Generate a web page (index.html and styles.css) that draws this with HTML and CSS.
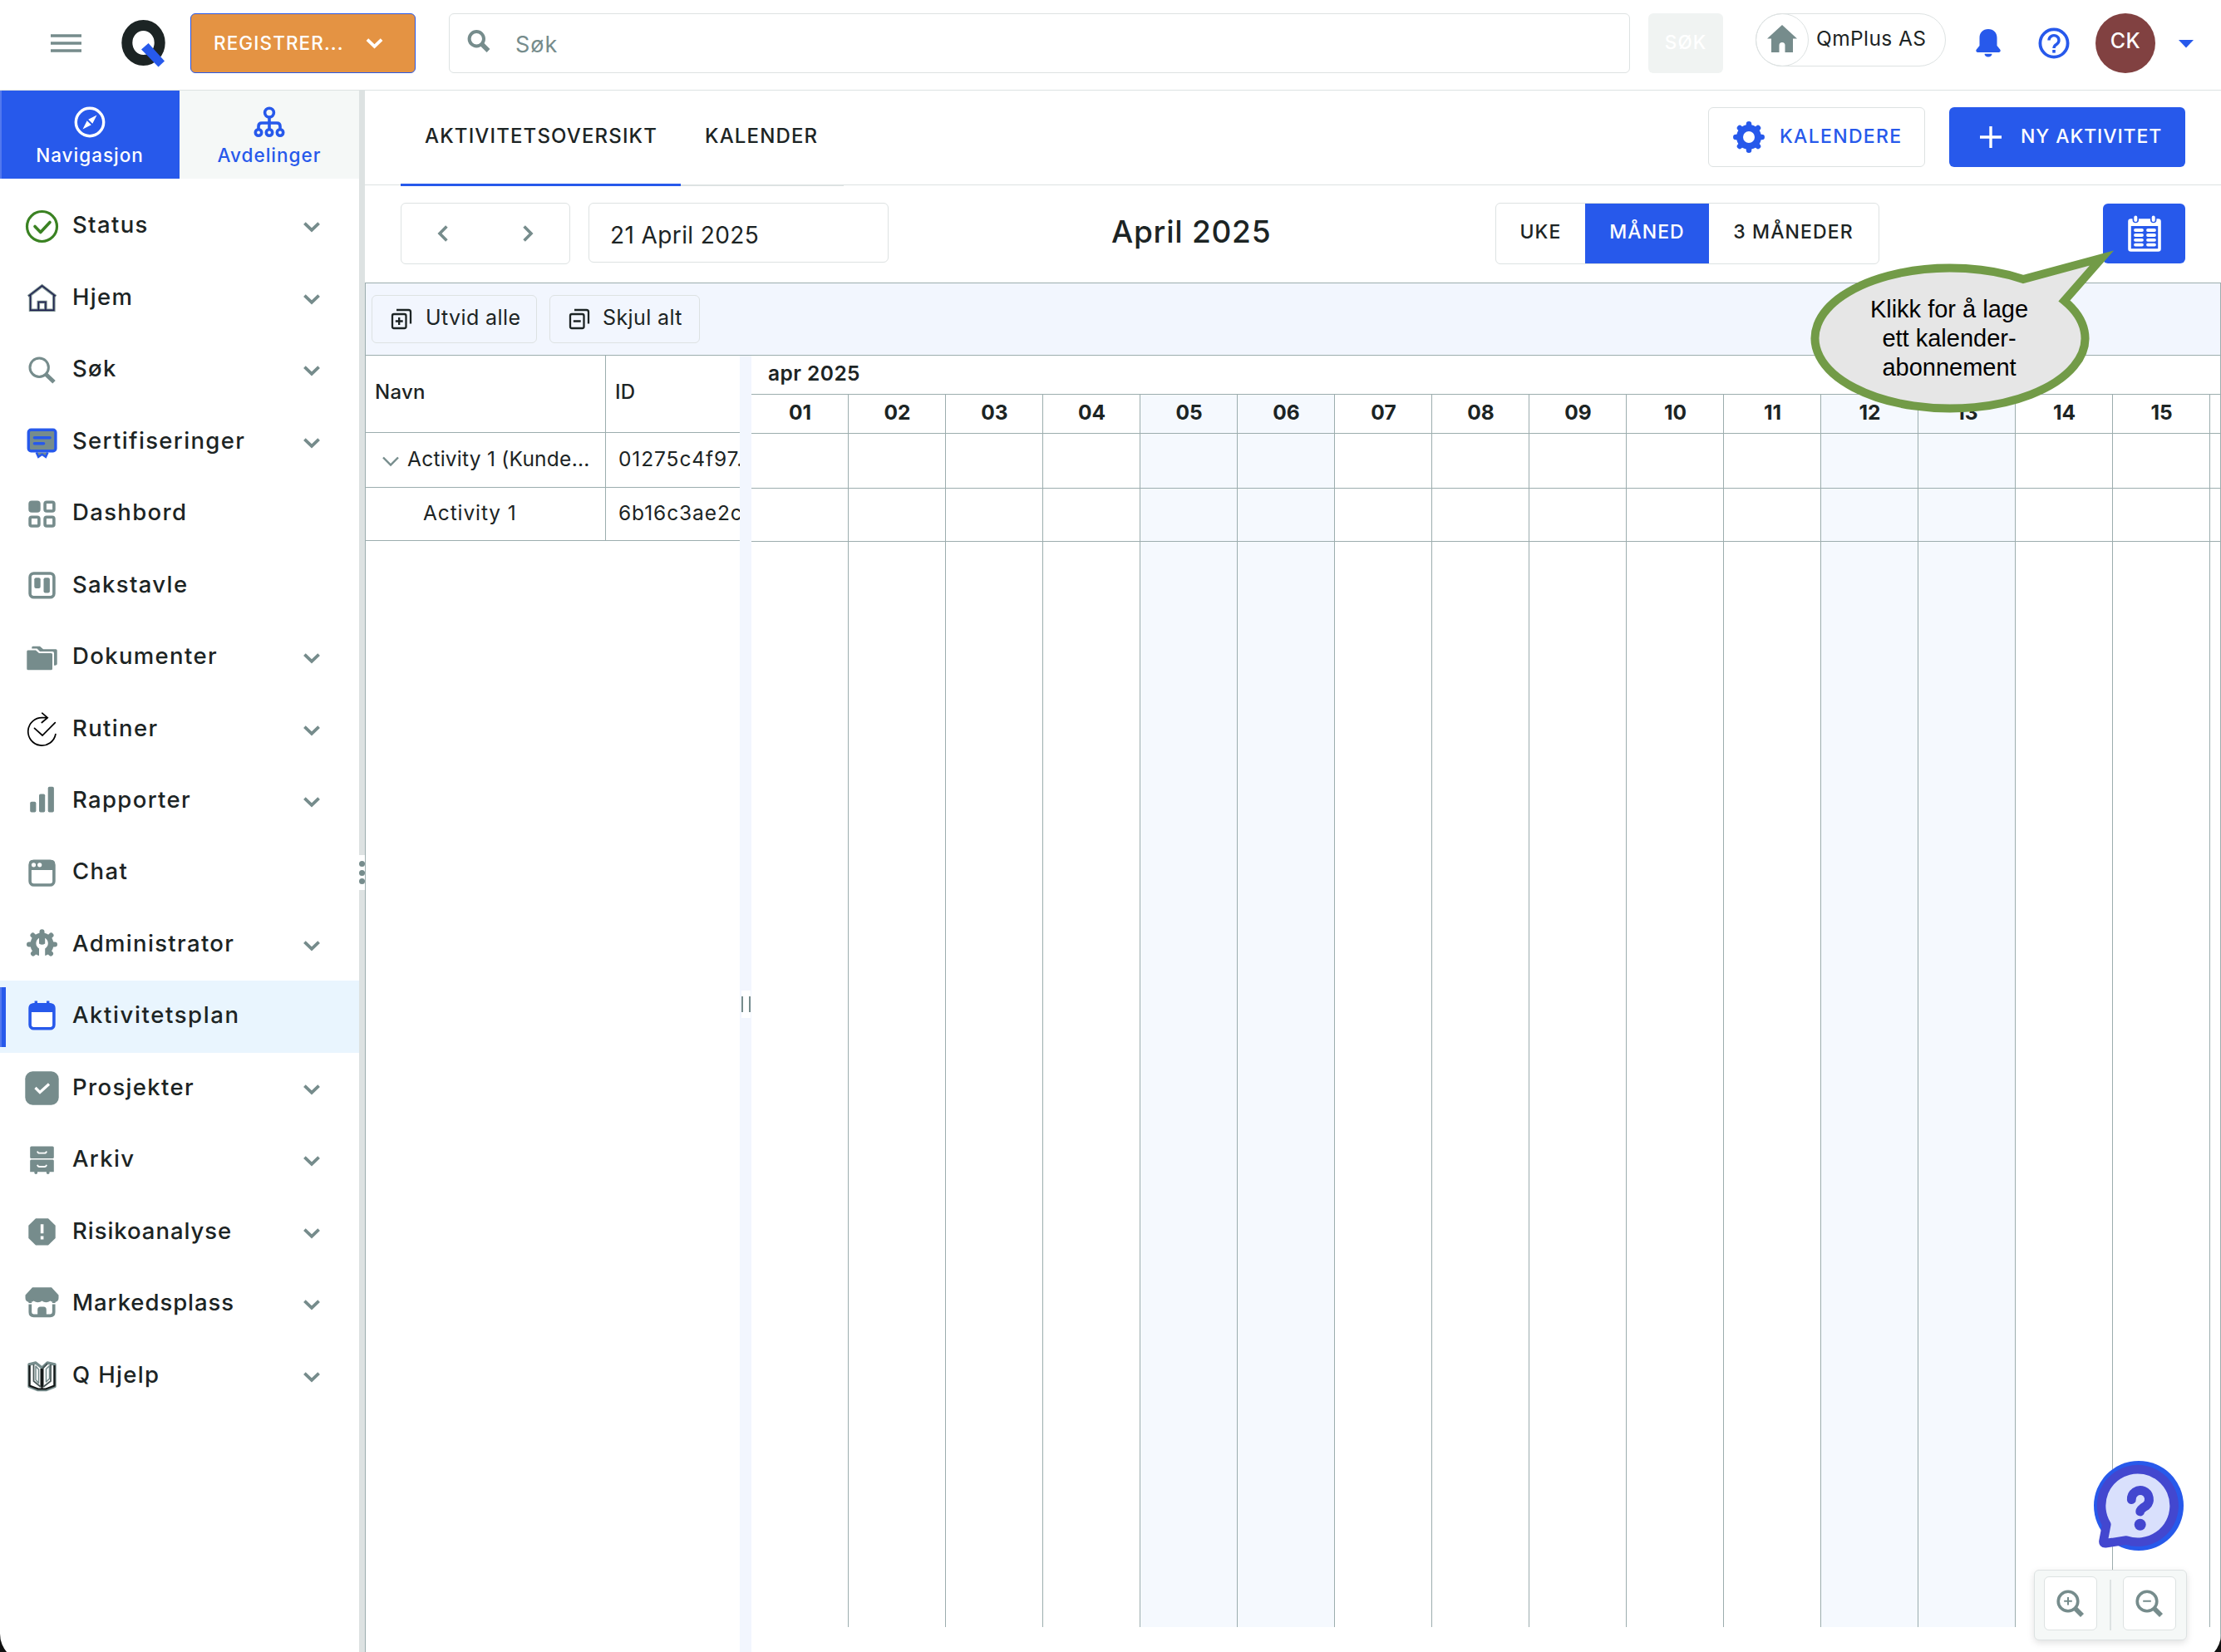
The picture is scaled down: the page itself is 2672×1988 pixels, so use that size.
FILE: index.html
```html
<!DOCTYPE html>
<html lang="no">
<head>
<meta charset="utf-8">
<title>Aktivitetsplan</title>
<link rel="stylesheet" href="styles.css">
</head>
<body>
<svg class="defs" width="0" height="0">
  <symbol id="chev" viewBox="0 0 20 13"><path d="M1.4 1.6 10 9.8 18.6 1.6" fill="none" stroke="currentColor" stroke-width="3.8"/></symbol>
</svg>
<div class="app">
  <header class="topbar">
    <svg class="burger" width="37" height="22" viewBox="0 0 37 22"><path d="M0 2h37M0 11h37M0 20h37" stroke="#768c8c" stroke-width="3.6"/></svg>
    <svg class="logo" width="56" height="58" viewBox="0 0 56 58"><ellipse cx="26.5" cy="27.5" rx="19.7" ry="21" fill="none" stroke="#1c2424" stroke-width="13"/><path d="M32.6 28 52 49.5 44.5 56.5 24 35.5Z" fill="#2759eb"/></svg>
    <button class="register"><span>REGISTRER...</span><svg width="21" height="13"><use href="#chev"/></svg></button>
    <div class="search">
      <svg width="29" height="28" viewBox="0 0 29 28"><circle cx="11.3" cy="10.7" r="8.7" fill="none" stroke="#768c8c" stroke-width="4"/><path d="m17.5 17 8 8" stroke="#768c8c" stroke-width="5.4"/></svg>
      <span>Søk</span>
    </div>
    <button class="search-btn">SØK</button>
    <div class="org">
      <span class="org-icon"><svg width="36" height="34" viewBox="0 0 36 34"><path d="M18 0 36 16.5H31V33H21.500V24.500a3.500 3.500 0 0 0-7 0V33H5V16.500H0Z" fill="#768c8c"/></svg></span>
      <span class="org-name">QmPlus AS</span>
    </div>
    <svg class="bell" width="30" height="34" viewBox="0 0 30 34"><path d="M15 0C8.500 0 4.500 4.500 4.500 10.500V20L.8 24.500C-.2 26 .3 28 2.300 28H27.700C29.700 28 30.200 26 29.200 24.500L25.500 20V10.500C25.500 4.500 21.500 0 15 0ZM10.500 29.800h9a4.500 3.800 0 0 1-9 0Z" fill="#2759eb"/></svg>
    <svg class="help" width="38" height="38" viewBox="0 0 38 38"><circle cx="19" cy="19" r="16.600" fill="none" stroke="#2759eb" stroke-width="3.800"/><path d="M13 15.500a6 5.800 0 1 1 9.300 4.800C20 21.700 19 22.600 19 25" fill="none" stroke="#2759eb" stroke-width="3.400"/><rect x="17.200" y="27" width="3.600" height="3.600" fill="#2759eb"/></svg>
    <div class="avatar">CK</div>
    <svg class="caret" width="18" height="10" viewBox="0 0 18 10"><path d="M0 0h18L9 9.500Z" fill="#2759eb"/></svg>
  </header>

  <div class="shell">
    <aside class="sidebar">
      <div class="side-tabs">
        <div class="side-tab active">
          <svg width="38" height="38" viewBox="0 0 38 38"><circle cx="19" cy="19" r="16.700" fill="none" stroke="#fff" stroke-width="3.400"/><path d="M27.500 10.500 22.300 20.800 17.200 15.800ZM10.500 27.500 15.700 17.200 20.800 22.200Z" fill="#fff"/></svg>
          <span>Navigasjon</span>
        </div>
        <div class="side-tab">
          <svg width="38" height="38" viewBox="0 0 38 38" fill="none" stroke="#2759eb" stroke-width="3.600"><circle cx="19" cy="7.600" r="5.400"/><path d="M19 13V28M6 28V24q0-4 4-4H28q4 0 4 4V28"/><circle cx="6" cy="31.500" r="3.700"/><circle cx="19" cy="31.500" r="3.700"/><circle cx="32" cy="31.500" r="3.700"/></svg>
          <span>Avdelinger</span>
        </div>
      </div>
      <nav class="menu">
        <div class="item"><svg class="ic" viewBox="0 0 41 41" fill="none" stroke="#3a8222" stroke-width="3.200"><circle cx="20.500" cy="20.500" r="18"/><path d="M12 20.500 18.800 27.500 30 15.500" stroke-width="3.600" stroke-linecap="round" stroke-linejoin="round"/></svg><span>Status</span><svg class="chev"><use href="#chev"/></svg></div>
        <div class="item"><svg class="ic" viewBox="0 0 41 41" fill="none"><path d="M4 18.700 20.600 6 37.200 18.700M6.600 17V35.200H34.800V17M16.300 35V25.500H24.900V35" stroke="#768c8c" stroke-width="3.600"/><path d="M4.500 18.300 20.600 6 36.700 18.300M6.600 17V35.200H34.800V17M16.300 35V25.500H24.900V35" stroke="#1f1f50" stroke-width="1.400"/></svg><span>Hjem</span><svg class="chev"><use href="#chev"/></svg></div>
        <div class="item"><svg class="ic" viewBox="0 0 41 41" fill="none" stroke="#768c8c"><circle cx="17.200" cy="17.200" r="11.200" stroke-width="3"/><path d="m25 25.300 10 9.500" stroke-width="5"/></svg><span>Søk</span><svg class="chev"><use href="#chev"/></svg></div>
        <div class="item"><svg class="ic" viewBox="0 0 41 41" fill="#768c8c" stroke="#2759eb"><path d="M13.800 33.500 16.200 38.800 20.600 35.800 25 38.800 27.400 33.500" stroke-width="2.600"/><rect x="4.300" y="6.200" width="32.600" height="25.600" rx="3" stroke-width="3.400"/><path d="M11.500 15.700H30M11.500 22.800H22.500" stroke-width="3.600" stroke-linecap="round"/></svg><span>Sertifiseringer</span><svg class="chev"><use href="#chev"/></svg></div>
        <div class="item"><svg class="ic" viewBox="0 0 41 41" fill="none" stroke="#768c8c" stroke-width="3.600"><rect x="6.100" y="6.200" width="10.800" height="10.800" rx="2" fill="#768c8c"/><rect x="24.100" y="6.200" width="10.800" height="10.800" rx="2"/><rect x="6.100" y="24.200" width="10.800" height="10.800" rx="2"/><rect x="24.100" y="24.200" width="10.800" height="10.800" rx="2"/></svg><span>Dashbord</span></div>
        <div class="item"><svg class="ic" viewBox="0 0 41 41" fill="#768c8c"><rect x="6.100" y="6" width="28.800" height="28.800" rx="4.500" fill="none" stroke="#768c8c" stroke-width="3.600"/><rect x="11.300" y="11.200" width="7.400" height="12.800" rx="2"/><rect x="22.500" y="11.200" width="7.400" height="18.200" rx="2"/></svg><span>Sakstavle</span></div>
        <div class="item"><svg class="ic" viewBox="0 0 41 41" fill="#768c8c"><path d="M3.500 11.500H13L17 15H31.500Q33 15 33 16.500V33.700Q33 35.200 31.500 35.200H3.800Q2.300 35.200 2.300 33.700V13Q2.300 11.500 3.500 11.500Z"/><path d="M8.300 8Q8.300 6.800 9.800 6.800H18L22 10.200H37.200Q38.700 10.200 38.700 11.700V28Q38.700 29.800 35 29.800V15Q35 13 33 13H18L14.500 9.500H8.300Z"/></svg><span>Dokumenter</span><svg class="chev"><use href="#chev"/></svg></div>
        <div class="item"><svg class="ic" viewBox="0 0 41 41" fill="none" stroke="#000" stroke-width="1.700" stroke-linecap="round"><path d="M27 6.700H21A16.700 16.700 0 1 0 36.900 26.500M20.700 1.200 27.200 6.700 20.300 12.500M11.500 19.300 21 28 36.300 12.700"/></svg><span>Rutiner</span><svg class="chev"><use href="#chev"/></svg></div>
        <div class="item"><svg class="ic" viewBox="0 0 41 41" fill="#768c8c"><rect x="6.200" y="21.800" width="7.200" height="12.700" rx="1.800"/><rect x="17" y="12.500" width="7.200" height="22" rx="1.800"/><rect x="27.700" y="3.700" width="7.200" height="30.800" rx="1.800"/></svg><span>Rapporter</span><svg class="chev"><use href="#chev"/></svg></div>
        <div class="item"><svg class="ic" viewBox="0 0 41 41"><rect x="6.100" y="6.200" width="28.800" height="28.800" rx="4.500" fill="none" stroke="#768c8c" stroke-width="3.600"/><path d="M5 17V9Q5 5 9 5H32Q36 5 36 9V17Z" fill="#768c8c"/><circle cx="10.500" cy="10.800" r="2.600" fill="#fff"/><circle cx="17.700" cy="10.800" r="2.600" fill="#fff"/></svg><span>Chat</span></div>
        <div class="item"><svg class="ic" viewBox="0 0 41 41"><circle cx="20.500" cy="20.500" r="14" fill="#768c8c"/><path d="M20.500 20.500V5.300M20.500 20.500 31.500 9.500M20.500 20.500H36M20.500 20.500 31 31.500M20.500 20.500 10 31.500M20.500 20.500H5M20.500 20.500 9.500 9.500" stroke="#768c8c" stroke-width="6" stroke-linecap="round"/><path d="M17 12.800A7.400 7.400 0 0 0 17 25.500V37H24.200V25.500A7.400 7.400 0 0 0 24.200 12.800V19.500Q20.600 22 17 19.500Z" fill="#fff"/></svg><span>Administrator</span><svg class="chev"><use href="#chev"/></svg></div>
        <div class="item current"><svg class="ic" viewBox="0 0 41 41"><rect x="6.100" y="5.800" width="28.800" height="29" rx="4.500" fill="#fff" stroke="#2759eb" stroke-width="3.600"/><path d="M5 15V9Q5 5 9 5H32Q36 5 36 9V15ZM11.600 1.500h3.400v5h-3.400ZM26 1.500h3.400v5H26Z" fill="#2759eb"/></svg><span>Aktivitetsplan</span></div>
        <div class="item"><svg class="ic" viewBox="0 0 41 41"><rect x=".3" y=".3" width="40.400" height="40.400" rx="9" fill="#768c8c"/><path d="M12.500 20 18 25.500 29 15.500" fill="none" stroke="#fff" stroke-width="3.200"/></svg><span>Prosjekter</span><svg class="chev"><use href="#chev"/></svg></div>
        <div class="item"><svg class="ic" viewBox="0 0 41 41" fill="#768c8c"><rect x="6.200" y="3.500" width="28.600" height="14.400" rx="1.500"/><path d="M7.500 19.500H33.500Q34.800 19.500 34.800 21V34.300H29.500V36q-1.800 2-3.600 0V34.300H15V36q-1.800 2-3.600 0V34.300H6.200V21Q6.200 19.500 7.500 19.500Z"/><path d="M15 9.500Q15.500 11.700 17.500 11.700H23.500Q25.500 11.700 26 9.500M15 25.800Q15.500 28 17.500 28H23.500Q25.500 28 26 25.800" fill="none" stroke="#fff" stroke-width="1.800"/></svg><span>Arkiv</span><svg class="chev"><use href="#chev"/></svg></div>
        <div class="item tight"><svg class="ic" viewBox="0 0 41 41"><path d="M13 4.200H28L36.700 12.800V28L28 36.600H13L4.300 28V12.800Z" fill="#768c8c"/><path d="M18.800 11.200h3.600v11h-3.600ZM18.800 25.500h3.600v4h-3.600Z" fill="#fff"/></svg><span>Risikoanalyse</span><svg class="chev"><use href="#chev"/></svg></div>
        <div class="item tight"><svg class="ic" viewBox="0 0 41 41"><path d="M6.300 18V30Q6.300 34.300 10.500 34.300H30.500Q34.700 34.300 34.700 30V18" fill="none" stroke="#768c8c" stroke-width="3.700"/><path d="M15.200 34V27Q15.200 23.500 18.500 23.500H22.500Q25.800 23.500 25.800 27V34ZM9 .2H32L40.500 9.500V13Q40.500 17.500 35.500 18.200 32.500 18.200 30.500 16.500 28 18.200 25.500 18.200 22.500 18.200 20.500 16.500 18.500 18.200 15.500 18.200 13 18.200 10.500 16.500 8.500 18.200 5.500 18.200.5 17.500.5 13V9.500Z" fill="#768c8c"/><path d="M3 19.800H38" stroke="#fff" stroke-width="1.600"/></svg><span>Markedsplass</span><svg class="chev"><use href="#chev"/></svg></div>
        <div class="item"><svg class="ic" viewBox="0 0 41 41" fill="none" stroke-linejoin="round"><path d="M5 7V33.500L15 37.500H26L36 33.500V7L27 5 20.500 11 13 5Z" stroke="#768c8c" stroke-width="3.400"/><path d="M5.500 8V32.500L16 36.500H25L35.500 32.500V8M20.500 12V36" stroke="#141818" stroke-width="2.200"/><path d="M20.500 12V34" stroke="#141818" stroke-width="4"/><path d="M10.500 7V27L19 34M31 7V27L22 34M21 12 27 6" stroke="#4a5858" stroke-width="1.800"/><path d="M25.500 12.500V28L29.500 24V8.500Z" stroke="#768c8c" stroke-width="1.500" fill="#fff"/><path d="M13 9V25.500L16.500 29.500V13Z" stroke="#768c8c" stroke-width="1.500" fill="#fff"/></svg><span>Q Hjelp</span><svg class="chev"><use href="#chev"/></svg></div>
      </nav>
    </aside>
    <div class="side-split"><div class="grip"><i></i><i></i><i></i></div></div>

    <main class="main">
      <div class="tabs-row">
        <div class="tab active">AKTIVITETSOVERSIKT</div>
        <div class="tab">KALENDER</div>
        <button class="btn-cal"><svg width="38" height="38" viewBox="0 0 38 38"><circle cx="19" cy="19" r="11" fill="none" stroke="#2759eb" stroke-width="8"/><path d="M19 6V3.300M19 32v2.700M6 19H3.300M32 19h2.700M9.800 9.800 8 8M28.200 9.800 30 8M9.800 28.200 8 30M28.200 28.200 30 30" stroke="#2759eb" stroke-width="6.500" stroke-linecap="round"/></svg><span>KALENDERE</span></button>
        <button class="btn-new"><svg width="26" height="26" viewBox="0 0 26 26"><path d="M13 0V26M0 13H26" stroke="#fff" stroke-width="3.400"/></svg><span>NY AKTIVITET</span></button>
      </div>

      <div class="toolbar">
        <div class="stepper">
          <svg width="13" height="20" viewBox="0 0 13 20"><path d="M11.400 1.400 3 10 11.400 18.600" fill="none" stroke="#768c8c" stroke-width="3.600"/></svg>
          <svg width="13" height="20" viewBox="0 0 13 20"><path d="M1.600 1.400 10 10 1.600 18.600" fill="none" stroke="#768c8c" stroke-width="3.600"/></svg>
        </div>
        <div class="date">21 April 2025</div>
        <h1 class="title">April 2025</h1>
        <div class="range"><span class="r-week">UKE</span><span class="r-month">MÅNED</span><span class="r-quarter">3 MÅNEDER</span></div>
        <button class="subscribe"><svg width="40" height="44" viewBox="0 0 40 44"><rect x="2" y="6" width="36" height="36" rx="1.500" fill="none" stroke="#fff" stroke-width="3.600"/><path d="M1 5H39V13H1Z" fill="#fff"/><path d="M9.300 2.500V5.500M30.700 2.500V5.500" stroke="#2759eb" stroke-width="7.500" stroke-linecap="round"/><path d="M9.300 2.500V6M30.700 2.500V6" stroke="#fff" stroke-width="4" stroke-linecap="round"/><path d="M9 18H17M24 18H32M9 24H17M24 24H32M9 29.800H17M24 29.800H32M9 35.600H17M24 35.600H32" stroke="#fff" stroke-width="3.800" stroke-linecap="round"/></svg></button>
      </div>

      <section class="gantt">
        <div class="actions">
          <button class="act act-open"><svg width="26" height="26" viewBox="0 0 26 26" fill="none" stroke="#1c2424" stroke-width="2.300"><rect x="2" y="7" width="16.500" height="17" rx="2"/><path d="M7 2H21.500Q24 2 24 4.500V18.500M10.200 11V20M5.800 15.500H14.700"/></svg><span>Utvid alle</span></button>
          <button class="act act-close"><svg width="26" height="26" viewBox="0 0 26 26" fill="none" stroke="#1c2424" stroke-width="2.300"><rect x="2" y="7" width="16.500" height="17" rx="2"/><path d="M7 2H21.500Q24 2 24 4.500V18.500M5.800 15.500H14.700"/></svg><span>Skjul alt</span></button>
        </div>
        <div class="gantt-body">
          <div class="grid">
            <div class="row head"><div class="c-name">Navn</div><div class="c-id">ID</div></div>
            <div class="row r1"><div class="c-name"><svg width="20" height="13" viewBox="0 0 20 13"><path d="M1 1.500 10 10.500 19 1.500" fill="none" stroke="#768c8c" stroke-width="2.400"/></svg><span>Activity 1 (Kunde...</span></div><div class="c-id">01275c4f97.</div></div>
            <div class="row r2"><div class="c-name child">Activity 1</div><div class="c-id">6b16c3ae2c</div></div>
          </div>
          <div class="grid-split"><div class="pause"></div></div>
          <div class="timeline">
            <div class="month">apr 2025</div>
            <div class="days">
              <div class="day"><b>01</b><i></i><i></i></div>
              <div class="day"><b>02</b><i></i><i></i></div>
              <div class="day"><b>03</b><i></i><i></i></div>
              <div class="day"><b>04</b><i></i><i></i></div>
              <div class="day off"><b>05</b><i></i><i></i></div>
              <div class="day off"><b>06</b><i></i><i></i></div>
              <div class="day"><b>07</b><i></i><i></i></div>
              <div class="day"><b>08</b><i></i><i></i></div>
              <div class="day"><b>09</b><i></i><i></i></div>
              <div class="day"><b>10</b><i></i><i></i></div>
              <div class="day"><b>11</b><i></i><i></i></div>
              <div class="day off"><b>12</b><i></i><i></i></div>
              <div class="day off"><b>13</b><i></i><i></i></div>
              <div class="day"><b>14</b><i></i><i></i></div>
              <div class="day"><b>15</b><i></i><i></i></div>
              <div class="day"><b></b><i></i><i></i></div>
            </div>
          </div>
        </div>
      </section>
    </main>
  </div>

  <div class="callout">
    <svg width="380" height="210" viewBox="0 0 380 210"><path d="M261 44 A162.500 84.500 0 1 0 310.500 70 L355.500 18.500Z" fill="#e6e6e6" stroke="#729b47" stroke-width="10" stroke-miterlimit="10"/></svg>
    <p>Klikk for å lage<br>ett kalender-<br>abonnement</p>
  </div>

  <svg class="help-fab" width="112" height="112" viewBox="0 0 112 112"><circle cx="54" cy="54" r="54" fill="#2759eb"/><path d="M15.300 76.500A43.800 43.800 0 1 1 39 95.500L14 99.300Q11 99.500 11.500 96.500Z" fill="#d9e0fc" stroke="#4347cf" stroke-width="10.600" stroke-linejoin="round"/><path d="M45.300 46.700A10.600 10.600 0 1 1 63 54Q56 58 55.700 61" fill="none" stroke="#4347cf" stroke-width="10.800" stroke-linecap="round"/><circle cx="55.700" cy="76.700" r="7" fill="#4347cf"/></svg>

  <div class="zoom">
    <button><svg width="34" height="34" viewBox="0 0 34 34" fill="none" stroke="#768c8c"><circle cx="14" cy="14" r="11.800" stroke-width="3.600"/><path d="m22 22 9 9" stroke-width="5.600"/><path d="M14 9v9.500M9.200 13.700h9.600" stroke-width="2"/></svg></button>
    <i></i>
    <button><svg width="34" height="34" viewBox="0 0 34 34" fill="none" stroke="#768c8c"><circle cx="14" cy="14" r="11.800" stroke-width="3.600"/><path d="m22 22 9 9" stroke-width="5.600"/><path d="M9.200 13.700h9.600" stroke-width="2"/></svg></button>
  </div>
</div>
</body>
</html>
```
FILE: styles.css
```css
* { box-sizing: border-box; }
html { height: 100%; background: #111; }
body {
  margin: 0;
  height: 1988px;
  overflow: hidden;
  background: #111;
  color: #1c2424;
  font-family: Inter, "Liberation Sans", sans-serif;
  font-weight: 500;
}
.defs { display: block; position: absolute; }
svg { display: block; flex: none; }
button {
  font: inherit;
  color: inherit;
  margin: 0;
  padding: 0;
  border: 0;
  background: none;
  display: flex;
  align-items: center;
  text-align: left;
}
/* The window runs past the bottom edge, so only part of its round corners shows */
.app {
  position: relative;
  width: 2672px;
  height: 2000px;
  background: #fff;
  border-radius: 0 0 34px 34px;
  overflow: hidden;
  display: flex;
  flex-direction: column;
  white-space: nowrap;
}

/* Top bar */
.topbar {
  height: 109px;
  border-bottom: 1px solid #dde2e2;
  display: flex;
  align-items: flex-start;
  padding: 16px 0 0 61px;
  flex: none;
}
.burger { margin-top: 25px; }
.logo { margin: 8px 0 0 48px; }
.register {
  margin-left: 27px;
  width: 271px;
  height: 72px;
  border: 1.500px solid #2759eb;
  border-radius: 6px;
  background: #e49343;
  color: #fff;
  padding-left: 27px;
  font-size: 22.500px;
  letter-spacing: 1.100px;
}
.register span { width: 183px; padding-bottom: 2px; }
.search {
  margin-left: 40px;
  width: 1421px;
  height: 72px;
  border: 1px solid #dde2e2;
  border-radius: 6px;
  display: flex;
  align-items: center;
  padding-left: 21px;
  gap: 29px;
  color: #768c8c;
  font-size: 27px;
  font-weight: 400;
}
.search svg { margin-top: -4px; }
.search span { padding-top: 2px; letter-spacing: 1px; }
.search-btn {
  margin-left: 22px;
  width: 90px;
  height: 72px;
  border-radius: 6px;
  background: #f0f3f2;
  color: #fff;
  justify-content: center;
  font-size: 22.500px;
  letter-spacing: 1px;
  padding-bottom: 3px;
}
.org {
  margin-left: 39px;
  width: 229px;
  height: 64px;
  border: 1px solid #dde2e2;
  border-radius: 32px;
  display: flex;
  align-items: center;
}
.org-icon {
  width: 64px;
  height: 64px;
  margin-left: -1px;
  border: 1px solid #dde2e2;
  border-radius: 50%;
  display: flex;
  align-items: center;
  justify-content: center;
  padding-bottom: 3px;
}
.org-name { margin-left: 9px; font-size: 24.500px; font-weight: 400; padding-bottom: 5px; letter-spacing: 0.400px; }
.bell { margin: 19px 0 0 36px; }
.help { margin: 17px 0 0 45px; }
.avatar {
  margin-left: 31px;
  width: 72px;
  height: 72px;
  border-radius: 50%;
  background: #814141;
  color: #fff;
  font-size: 25px;
  letter-spacing: 0.500px;
  text-align: center;
  line-height: 67px;
}
.caret { margin: 32px 0 0 28px; }

/* Sidebar */
.shell { flex: 1; display: flex; min-height: 0; }
.sidebar { width: 432px; flex: none; }
.side-tabs { display: flex; }
.side-tab {
  width: 216px;
  height: 106px;
  background: #f5f8f7;
  color: #2759eb;
  display: flex;
  flex-direction: column;
  align-items: center;
  padding-top: 19px;
  font-size: 22.500px;
  line-height: 30px;
  letter-spacing: 1px;
}
.side-tab span { margin-top: 6px; }
.side-tab.active { background: #2759eb; color: #fff; box-shadow: inset 2px 0 #5278ee; }
.menu { padding-top: 14px; }
.item {
  height: 86.470px;
  display: flex;
  align-items: center;
  padding: 0 47px 0 30px;
  font-size: 27.500px;
  letter-spacing: 1.350px;
}
.item.tight { letter-spacing: 0.950px; }
.item.current {
  letter-spacing: 1.600px;
  background: linear-gradient(90deg, #5278ee 2px, #2759eb 2px) 0 8px / 7px 72px no-repeat #e9f5fe;
}
.ic { width: 41px; height: 41px; }
.item span { flex: 1; margin-left: 16px; padding-bottom: 4px; }
.chev { width: 20px; height: 13px; color: #768c8c; margin-top: 3px; }
.side-split {
  width: 7px;
  flex: none;
  background: #dde2e2;
  padding-top: 920px;
}
.grip {
  height: 42px;
  background: #fff;
  display: flex;
  flex-direction: column;
  align-items: center;
  justify-content: center;
  gap: 3.500px;
}
.grip i { width: 7px; height: 7px; border-radius: 50%; background: #768c8c; }

/* Page head */
.main { flex: 1; min-width: 0; display: flex; flex-direction: column; }
.tabs-row {
  height: 114px;
  border-bottom: 1px solid #dde2e2;
  display: flex;
  align-items: flex-start;
  padding: 0 43px;
  flex: none;
}
.tab {
  height: 115px;
  border-bottom: 2px solid #dde2e2;
  padding-left: 29px;
  line-height: 109px;
  font-size: 24px;
  letter-spacing: 1.150px;
  width: 196px;
}
.tab.active { width: 337px; border-bottom: 3px solid #2759eb; }
.btn-cal, .btn-new {
  margin-top: 20px;
  height: 72px;
  border-radius: 6px;
  font-size: 23px;
}
.btn-cal { margin-left: auto; width: 261px; border: 1px solid #dde2e2; color: #2759eb; padding-left: 29px; gap: 18px; letter-spacing: 1.300px; }
.btn-new { margin-left: 29px; width: 284px; background: #2759eb; color: #fff; padding-left: 37px; gap: 23px; letter-spacing: 0.900px; }
.btn-cal span, .btn-new span { padding-bottom: 2px; }

/* Calendar controls */
.toolbar { height: 117px; padding: 21px 43px 0; display: flex; align-items: flex-start; flex: none; }
.stepper {
  width: 204px;
  height: 74px;
  border: 1px solid #dde2e2;
  border-radius: 6px;
  display: flex;
  align-items: center;
  justify-content: space-between;
  padding: 0 43px;
}
.date {
  margin-left: 22px;
  width: 361px;
  height: 72px;
  border: 1px solid #dde2e2;
  border-radius: 6px;
  font-size: 28px;
  font-weight: 400;
  letter-spacing: 0.400px;
  line-height: 77px;
  padding-left: 25px;
}
.title { margin: 0 0 0 268px; width: 462px; font-size: 37px; font-weight: 500; line-height: 69px; letter-spacing: 0.750px; }
.range {
  width: 462px;
  height: 74px;
  border: 1px solid #dde2e2;
  border-radius: 6px;
  display: flex;
  font-size: 23px;
  letter-spacing: 1.100px;
  line-height: 68px;
  text-align: center;
}
.r-week { width: 107px; }
.r-month { width: 149px; background: #2759eb; color: #fff; }
.r-quarter { width: 203px; }
.subscribe {
  margin: 1px 0 0 auto;
  width: 99px;
  height: 72px;
  border-radius: 6px;
  background: #2759eb;
  justify-content: center;
}

/* Gantt chart */
.gantt { flex: 1; border: 1px solid #9cadae; border-bottom: 0; display: flex; flex-direction: column; min-height: 0; }
.actions {
  height: 87px;
  flex: none;
  background: #f2f6fe;
  border-bottom: 1px solid #9cadae;
  display: flex;
  gap: 15px;
  padding: 14px 7px;
}
.act { height: 58px; border: 1px solid #dde2e2; border-radius: 6px; padding-left: 22px; gap: 16px; font-size: 25px; font-weight: 400; letter-spacing: 0.400px; }
.act span { padding-bottom: 4px; }
.act-open { width: 199px; }
.act-close { width: 181px; gap: 15px; }
.gantt-body { flex: 1; display: flex; min-height: 0; }
.grid { width: 450px; flex: none; overflow: hidden; }
.row { display: flex; border-bottom: 1px solid #9cadae; font-size: 24.500px; font-weight: 400; }
.c-name { width: 289px; flex: none; border-right: 1px solid #9cadae; display: flex; align-items: center; padding-bottom: 3px; letter-spacing: 0.250px; }
.c-id { padding: 0 0 3px 15px; display: flex; align-items: center; letter-spacing: 0.900px; }
.head { height: 93px; font-size: 24px; font-weight: 500; }
.head .c-name { padding-left: 11px; padding-bottom: 5px; }
.head .c-id { padding-left: 11px; padding-bottom: 5px; letter-spacing: 0.250px; }
.r1 { height: 66px; }
.r1 .c-name { padding-left: 20px; gap: 10px; }
.r1 svg { margin-top: 6px; }
.r2 { height: 64px; }
.c-name.child { padding-left: 69px; letter-spacing: 0.900px; }
.grid-split { width: 14px; flex: none; background: #f2f6fe; padding-top: 764px; }
.pause { width: 11px; height: 33px; margin-left: 2px; border: solid #fff; border-width: 7px 0; background: linear-gradient(90deg, #768c8c 2px, #fff 2px 9px, #768c8c 9px); }
.timeline { flex: 1; min-width: 0; overflow: hidden; }
.month { height: 47px; border-bottom: 1px solid #9cadae; padding-left: 20px; font-size: 24.500px; font-weight: 600; line-height: 43px; letter-spacing: 0.450px; }
.days { display: flex; height: 1483px; }
.day { width: 117px; flex: none; border-right: 1px solid #9cadae; }
.day b { display: block; height: 47px; line-height: 43px; text-align: center; font-size: 24.500px; font-weight: 700; }
.day b, .day i { border-bottom: 1px solid #9cadae; margin-right: -1px; }
.day i { display: block; height: 66px; }
.day i + i { height: 64px; }
.day.off { background: #f5f9fe; }

/* Overlays */
.callout { position: absolute; left: 2173px; top: 292px; }
.callout p {
  position: absolute;
  left: 22px;
  top: 63px;
  width: 300px;
  margin: 0;
  text-align: center;
  font: 29px/35px "Liberation Sans", Arial, sans-serif;
  color: #000;
}
.help-fab { position: absolute; left: 2519px; top: 1758px; }
.zoom {
  position: absolute;
  left: 2447px;
  top: 1889px;
  width: 184px;
  height: 85px;
  background: #f5f8f7;
  border: 1px solid #dde2e2;
  border-radius: 6px;
  box-shadow: 0 3px 8px rgba(0, 0, 0, 0.12);
  display: flex;
  padding: 7px 11px 0;
}
.zoom button { width: 64px; height: 65px; background: #fff; border: 1px solid #dde2e2; border-radius: 6px; justify-content: center; }
.zoom i { width: 2px; height: 61px; margin: 4px 14px 0 15px; background: #dde2e2; }
```
